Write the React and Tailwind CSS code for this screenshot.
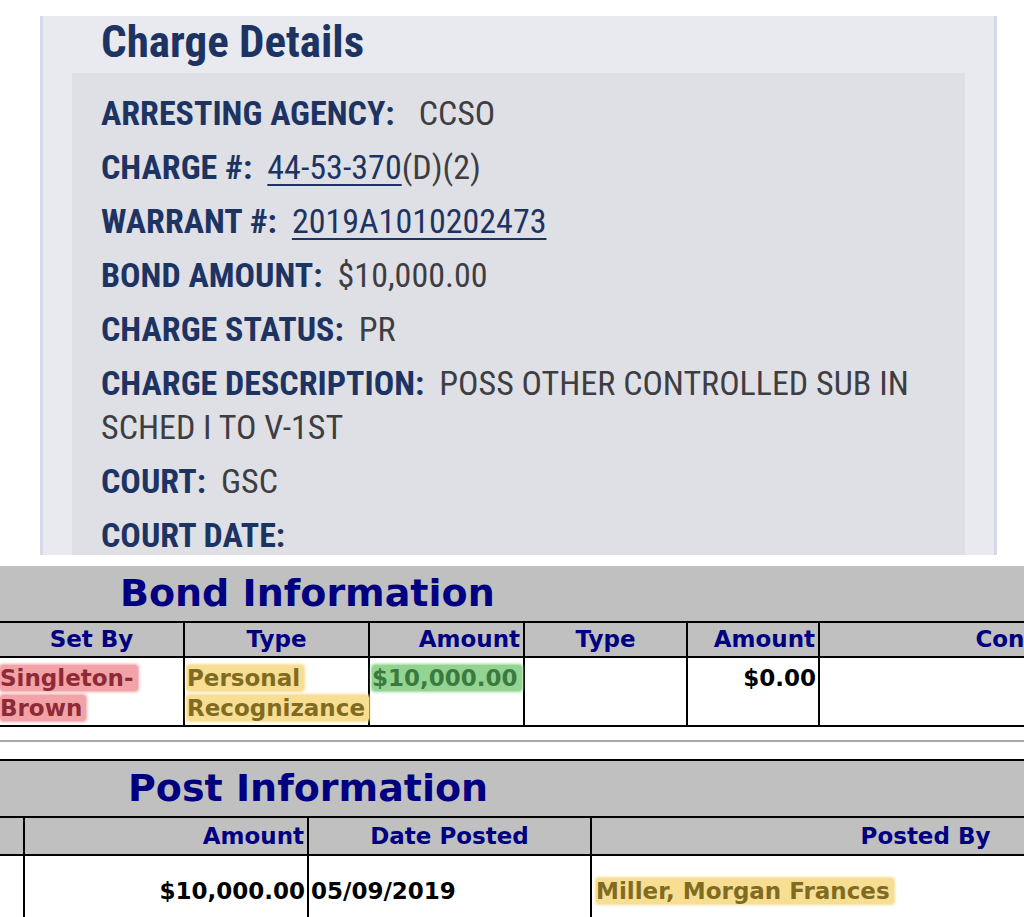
const labelCls = "font-bold text-[#1d3463]";
const valueCls = "text-[#3d3d42]";

function Field({ label, children }) {
  return (
    <div className="text-[34px] leading-[44px]">
      <span className={labelCls}>{label}</span>
      {children}
    </div>
  );
}

function Mark({ tone, children }) {
  const tones = {
    red: "bg-[#f3a3a8] text-[#8c2a36] shadow-[0_0_3px_1px_#f3a3a8]",
    yellow: "bg-[#f8de92] text-[#7f6c22] shadow-[0_0_3px_1px_#f8de92]",
    green: "bg-[#94d493] text-[#3b7a3e] shadow-[0_0_3px_1px_#94d493]",
  };
  return (
    <span className={`${tones[tone]} rounded-[3px] [box-decoration-break:clone] pr-[4px]`}>
      {children}
    </span>
  );
}

const th = "border-2 border-black bg-[#c0c0c0] text-[#000080] font-bold text-[23px] leading-[33px] px-[3px]";
const td = "border-2 border-black bg-white font-bold text-[23px] leading-[30px] px-[2px] align-top";

function BondTable() {
  return (
    <div className="overflow-hidden">
      <table className="table-fixed border-collapse w-[1270px]">
        <colgroup>
          <col className="w-[184px]" />
          <col className="w-[185px]" />
          <col className="w-[155px]" />
          <col className="w-[163px]" />
          <col className="w-[132px]" />
          <col className="w-[451px]" />
        </colgroup>
        <thead>
          <tr>
            <th colSpan={6} className="bg-[#c0c0c0] text-left pl-[120px] h-[55px] text-[38px] leading-[55px] font-bold text-[#000080]">
              Bond Information
            </th>
          </tr>
          <tr>
            <th className={`${th} border-l-0 text-center`}>Set By</th>
            <th className={`${th} text-center`}>Type</th>
            <th className={`${th} text-right`}>Amount</th>
            <th className={`${th} text-center`}>Type</th>
            <th className={`${th} text-right`}>Amount</th>
            <th className={`${th} text-center`}>Conditions</th>
          </tr>
        </thead>
        <tbody>
          <tr>
            <td className={`${td} border-l-0 pt-[5px] pb-[2px] pl-0`}>
              <Mark tone="red">Singleton-</Mark>
              <br />
              <Mark tone="red">Brown</Mark>
            </td>
            <td className={`${td} pt-[5px]`}>
              <Mark tone="yellow">Personal</Mark>
              <br />
              <Mark tone="yellow">Recognizance</Mark>
            </td>
            <td className={`${td} pt-[5px]`}>
              <Mark tone="green">$10,000.00</Mark>
            </td>
            <td className={td}></td>
            <td className={`${td} text-right pt-[5px] text-black`}>$0.00</td>
            <td className={td}></td>
          </tr>
        </tbody>
      </table>
    </div>
  );
}

function PostTable() {
  return (
    <div className="overflow-hidden">
      <table className="table-fixed border-collapse w-[1260px]">
        <colgroup>
          <col className="w-[24px]" />
          <col className="w-[284px]" />
          <col className="w-[283px]" />
          <col className="w-[669px]" />
        </colgroup>
        <thead>
          <tr>
            <th colSpan={4} className="border-t-2 border-black bg-[#c0c0c0] text-left pl-[128px] h-[55px] text-[38px] leading-[55px] font-bold text-[#000080]">
              Post Information
            </th>
          </tr>
          <tr>
            <th className={`${th} border-l-0 leading-[36px]`}></th>
            <th className={`${th} text-right leading-[36px]`}>Amount</th>
            <th className={`${th} text-center leading-[36px]`}>Date Posted</th>
            <th className={`${th} text-center leading-[36px]`}>Posted By</th>
          </tr>
        </thead>
        <tbody>
          <tr>
            <td className={`${td} border-l-0 h-[80px]`}></td>
            <td className={`${td} text-right pt-[20px] text-black`}>$10,000.00</td>
            <td className={`${td} text-left pt-[20px] text-black`}>05/09/2019</td>
            <td className={`${td} text-left pt-[20px] pl-[4px]`}>
              <Mark tone="yellow">Miller, Morgan Frances</Mark>
            </td>
          </tr>
        </tbody>
      </table>
    </div>
  );
}

export default function App() {
  return (
    <div className="bg-white w-[1024px] h-[917px] overflow-hidden">
      <div className="pt-[16px] pl-[40px] pr-[27px]">
        <div className="h-[539px] bg-[#e9eaf0] border-x-[3px] border-[#d6d9ea] font-['Roboto_Condensed',sans-serif] overflow-hidden">
          <h1 className="pl-[58px] pt-[4px] mb-[9px] text-[45px] leading-[44px] font-bold text-[#1d3463]">
            Charge Details
          </h1>
          <div className="mx-[29px] h-[482px] bg-[#dfe0e5] pl-[29px] pt-[18px] flex flex-col gap-[10px] overflow-hidden">
            <Field label="ARRESTING AGENCY:">
              <span className={`${valueCls} ml-[24px]`}>CCSO</span>
            </Field>
            <Field label="CHARGE #:">
              <a href="#" className="ml-[15px] text-[#1d3463] underline underline-offset-[5px] decoration-[2px]">
                44-53-370
              </a>
              <span className={valueCls}>(D)(2)</span>
            </Field>
            <Field label="WARRANT #:">
              <a href="#" className="ml-[15px] text-[#1d3463] underline underline-offset-[5px] decoration-[2px]">
                2019A1010202473
              </a>
            </Field>
            <Field label="BOND AMOUNT:">
              <span className={`${valueCls} ml-[15px]`}>$10,000.00</span>
            </Field>
            <Field label="CHARGE STATUS:">
              <span className={`${valueCls} ml-[15px]`}>PR</span>
            </Field>
            <Field label="CHARGE DESCRIPTION:">
              <span className={`${valueCls} ml-[15px]`}>POSS OTHER CONTROLLED SUB IN</span>
              <br />
              <span className={valueCls}>SCHED I TO V-1ST</span>
            </Field>
            <Field label="COURT:">
              <span className={`${valueCls} ml-[15px]`}>GSC</span>
            </Field>
            <Field label="COURT DATE:" />
          </div>
        </div>
      </div>

      <div className="mt-[11px] font-['DejaVu_Sans',Verdana,sans-serif]">
        <BondTable />
        <div className="mt-[13px] mb-[17px] border-t-2 border-[#a8a8a8]" />
        <PostTable />
      </div>
    </div>
  );
}
